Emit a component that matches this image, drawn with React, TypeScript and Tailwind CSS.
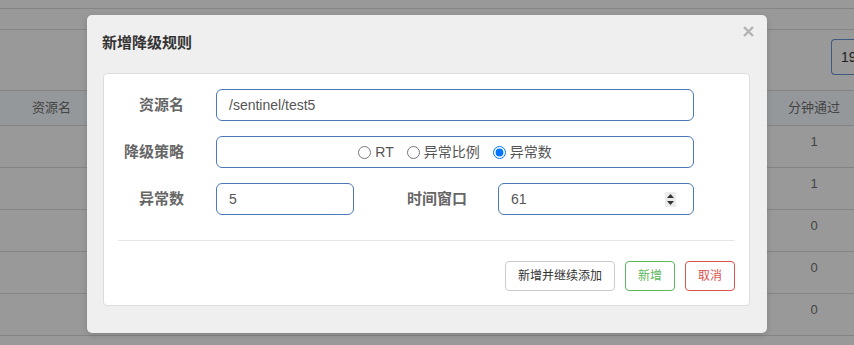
const FONT = "font-['Liberation_Sans','Noto_Sans_CJK_SC',sans-serif]";

const ROWS = ["1", "1", "0", "0", "0"];

function Spinner() {
  return (
    <div className="flex h-[15px] w-[11px] flex-col items-center justify-center gap-[3px] bg-[#ececec]">
      <svg width="7" height="4" viewBox="0 0 7 4">
        <polygon points="3.5,0 7,4 0,4" fill="#333" />
      </svg>
      <svg width="7" height="4" viewBox="0 0 7 4">
        <polygon points="0,0 7,0 3.5,4" fill="#333" />
      </svg>
    </div>
  );
}

function Radio({ label, checked }: { label: string; checked?: boolean }) {
  return (
    <label className="flex items-center">
      <input type="radio" name="grade" defaultChecked={checked} className="m-0 h-[13px] w-[13px]" />
      <span className="ml-[4px]">{label}</span>
    </label>
  );
}

export default function App() {
  return (
    <div className={`relative h-[345px] w-[854px] overflow-hidden bg-[#999] ${FONT}`}>
      {/* ── page behind the dialog ── */}
      <div className="h-[9px] border-b border-[#858585]" />
      <div className="h-[21px] border-b border-[#858585]" />
      <div className="flex h-[61px] justify-end border-b border-[#858585] pt-[9px]">
        <div className="flex h-[36px] w-[23px] items-center rounded-l-[4px] border border-r-0 border-[#3e5a7e] pl-[9px] text-[14px] text-[#222]">
          19
        </div>
      </div>
      <div className="flex h-[35px] items-center border-b border-[#858585] bg-[#95989b] text-[13px] text-[#444]">
        <div className="w-[71px] text-right">资源名</div>
        <div className="ml-auto w-[80px] text-center">分钟通过</div>
      </div>
      {ROWS.map((v, i) => (
        <div key={i} className="flex h-[42px] border-b border-[#858585] pt-[6px] text-[13px] leading-[20px] text-[#444]">
          <div className="ml-auto w-[80px] text-center">{v}</div>
        </div>
      ))}

      {/* ── dialog ── */}
      <div className="absolute left-[87px] top-[15px] h-[318px] w-[680px] rounded-[5px] bg-[#efefef] shadow-[0_2px_6px_rgba(0,0,0,0.15)]">
        <svg className="absolute right-[13px] top-[11px]" width="11" height="11" viewBox="0 0 11 11">
          <path d="M1 1L10 10M10 1L1 10" stroke="#b3b3b3" strokeWidth="2.4" />
        </svg>
        <h3 className="pl-[15px] pt-[18px] text-[15px] font-bold leading-[20px] text-[#333]">新增降级规则</h3>

        <div className="ml-[16px] mt-[20px] h-[233px] w-[647px] rounded-[4px] border border-[#dcdcdc] bg-white pt-[15px] text-[14px]">
          <div className="flex h-[32px] items-center">
            <div className="w-[80px] text-right text-[15px] font-bold text-[#666]">资源名</div>
            <div className="ml-[32px] flex h-[32px] w-[478px] items-center rounded-[6px] border border-[#4b79b7] pl-[12px] text-[#555]">
              /sentinel/test5
            </div>
          </div>

          <div className="mt-[15px] flex h-[32px] items-center">
            <div className="w-[80px] text-right text-[15px] font-bold text-[#666]">降级策略</div>
            <div className="ml-[32px] flex h-[32px] w-[478px] items-center justify-center gap-[13px] rounded-[6px] border border-[#4b79b7] text-[#555]">
              <Radio label="RT" />
              <Radio label="异常比例" />
              <Radio label="异常数" checked />
            </div>
          </div>

          <div className="mt-[15px] flex h-[32px] items-center">
            <div className="w-[80px] text-right text-[15px] font-bold text-[#666]">异常数</div>
            <div className="ml-[32px] flex h-[32px] w-[138px] items-center rounded-[6px] border border-[#4b79b7] pl-[12px] text-[#555]">
              5
            </div>
            <div className="w-[113px] text-right text-[15px] font-bold text-[#666]">时间窗口</div>
            <div className="ml-[31px] flex h-[32px] w-[196px] items-center justify-between rounded-[6px] border border-[#4b79b7] pl-[12px] pr-[17px] text-[#555]">
              <span>61</span>
              <Spinner />
            </div>
          </div>

          <div className="mx-[14px] mt-[25px] h-px bg-[#e5e5e5]" />

          <div className="mt-[20px] flex justify-end gap-[10px] pr-[14px] text-[12px]">
            <button className="h-[30px] w-[110px] rounded-[4px] border border-[#ccc] bg-white text-[#333]">新增并继续添加</button>
            <button className="h-[30px] w-[50px] rounded-[4px] border border-[#5cb85c] bg-white text-[#5cb85c]">新增</button>
            <button className="h-[30px] w-[50px] rounded-[4px] border border-[#d9534f] bg-white text-[#d9534f]">取消</button>
          </div>
        </div>
      </div>
    </div>
  );
}
